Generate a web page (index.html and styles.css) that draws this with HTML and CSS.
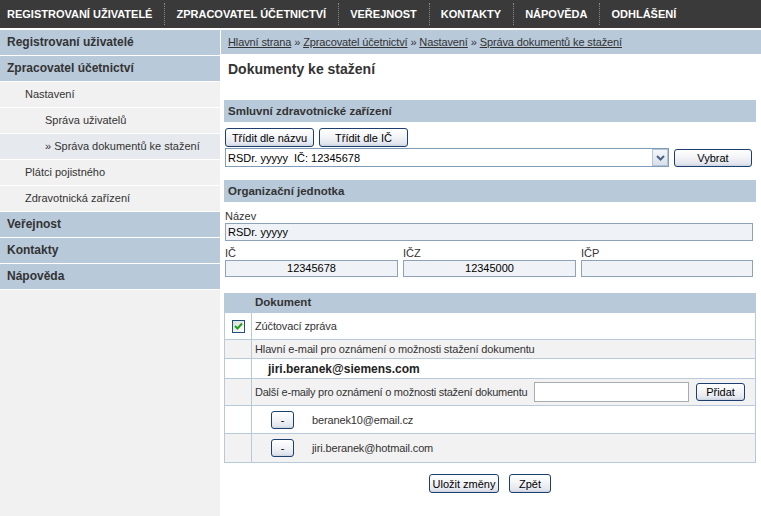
FILE: index.html
```html
<!DOCTYPE html>
<html lang="cs">
<head>
<meta charset="utf-8">
<title>Dokumenty ke stažení</title>
<link rel="stylesheet" href="styles.css">
</head>
<body>
<div class="topnav">
  <a class="nav-item first">REGISTROVANÍ UŽIVATELÉ</a>
  <a class="nav-item">ZPRACOVATEL ÚČETNICTVÍ</a>
  <a class="nav-item">VEŘEJNOST</a>
  <a class="nav-item">KONTAKTY</a>
  <a class="nav-item">NÁPOVĚDA</a>
  <a class="nav-item">ODHLÁŠENÍ</a>
</div>
<div class="page">
  <div class="sidebar">
    <div class="side-item l1">Registrovaní uživatelé</div>
    <div class="side-item l1">Zpracovatel účetnictví</div>
    <div class="side-item l2">Nastavení</div>
    <div class="side-item l3">Správa uživatelů</div>
    <div class="side-item l3 active">» Správa dokumentů ke stažení</div>
    <div class="side-item l2">Plátci pojistného</div>
    <div class="side-item l2">Zdravotnická zařízení</div>
    <div class="side-item l1">Veřejnost</div>
    <div class="side-item l1">Kontakty</div>
    <div class="side-item l1">Nápověda</div>
  </div>
  <div class="main">
    <div class="crumb"><a>Hlavní strana</a> » <a>Zpracovatel účetnictví</a> » <a>Nastavení</a> » <a>Správa dokumentů ke stažení</a></div>
    <div class="content">
      <h1 class="title">Dokumenty ke stažení</h1>

      <div class="bar">Smluvní zdravotnické zařízení</div>
      <div class="sort-row">
        <button class="btn w89">Třídit dle názvu</button>
        <button class="btn w89">Třídit dle IČ</button>
      </div>
      <div class="select-row">
        <div class="select">
          <span class="select-text">RSDr. yyyyy&nbsp; IČ: 12345678</span>
          <span class="select-arrow"><svg width="9" height="6" viewBox="0 0 9 6"><path d="M1 1 L4.5 4.5 L8 1" fill="none" stroke="#4d6185" stroke-width="2"/></svg></span>
        </div>
        <button class="btn w78">Vybrat</button>
      </div>

      <div class="bar bar2">Organizační jednotka</div>
      <div class="field-label">Název</div>
      <div class="ro-input wide">RSDr. yyyyy</div>
      <div class="triple">
        <div class="col">
          <div class="field-label sm">IČ</div>
          <div class="ro-input center">12345678</div>
        </div>
        <div class="col">
          <div class="field-label sm">IČZ</div>
          <div class="ro-input center">12345000</div>
        </div>
        <div class="col">
          <div class="field-label sm">IČP</div>
          <div class="ro-input center"></div>
        </div>
      </div>

      <div class="doc-table">
        <div class="row head"><div class="c1"></div><div class="c2">Dokument</div></div>
        <div class="row r27"><div class="c1"><span class="chk"><svg width="9" height="8" viewBox="0 0 9 8"><path d="M1 4 L3.5 6.5 L8 1.5" fill="none" stroke="#21a121" stroke-width="2"/></svg></span></div><div class="c2">Zúčtovací zpráva</div></div>
        <div class="row gray r19"><div class="c1"></div><div class="c2">Hlavní e-mail pro oznámení o možnosti stažení dokumentu</div></div>
        <div class="row r20"><div class="c1"></div><div class="c2 main-mail">jiri.beranek@siemens.com</div></div>
        <div class="row gray r27"><div class="c1"></div><div class="c2 add"><span class="add-label">Další e-maily pro oznámení o možnosti stažení dokumentu</span><span class="text-input"></span><button class="btn w49">Přidat</button></div></div>
        <div class="row r28"><div class="c1"></div><div class="c2 mail"><button class="btn minus">-</button><span>beranek10@email.cz</span></div></div>
        <div class="row gray r28"><div class="c1"></div><div class="c2 mail"><button class="btn minus">-</button><span>jiri.beranek@hotmail.com</span></div></div>
      </div>

      <div class="actions">
        <button class="btn w70">Uložit změny</button>
        <button class="btn w42">Zpět</button>
      </div>
    </div>
  </div>
</div>
</body>
</html>
```
FILE: styles.css
```css
* { box-sizing: border-box; }
html, body { margin: 0; padding: 0; background: #fff; }
body {
  font-family: "Liberation Sans", Arial, sans-serif;
  font-size: 11px;
  color: #333;
}

/* top navigation */
.topnav {
  height: 28px;
  background: #3a3a3a;
  display: flex;
  align-items: center;
  margin-bottom: 2px;
}
.nav-item {
  position: relative;
  color: #fff;
  font-weight: bold;
  font-size: 11px;
  padding: 0 12px;
  line-height: 28px;
  white-space: nowrap;
}
.nav-item.first { padding-left: 7px; }
.nav-item + .nav-item::before {
  content: "";
  position: absolute;
  left: 0;
  top: 3px;
  height: 22px;
  border-left: 1px dotted #8a8a8a;
}

/* layout */
.page { display: flex; gap: 1px; }
.sidebar {
  width: 220px;
  flex: 0 0 220px;
  background: #f1f1f1;
  min-height: 486px;
}
.main { flex: 1; }

/* sidebar */
.side-item {
  height: 26px;
  line-height: 25px;
  border-bottom: 1px solid #fff;
  white-space: nowrap;
  color: #333;
}
.side-item.l1 {
  background: #b8c9da;
  font-weight: bold;
  font-size: 12px;
  padding-left: 7px;
}
.side-item.l2 { padding-left: 25px; }
.side-item.l3 { padding-left: 45px; }
.side-item.active { background: #e6eaee; }

/* breadcrumb */
.crumb {
  height: 24px;
  line-height: 24px;
  background: #b8c9da;
  padding-left: 7px;
  color: #333;
  white-space: nowrap;
  letter-spacing: -0.12px;
}
.crumb a { text-decoration: underline; color: #333; }

.content { padding: 0 5px 0 3px; }

.title {
  margin: 7px 0 22px 4px;
  font-size: 14px;
  line-height: 17px;
  font-weight: bold;
  color: #333;
}

.bar {
  height: 22px;
  line-height: 22px;
  background: #b8c9da;
  padding-left: 4px;
  font-weight: bold;
  font-size: 11.5px;
  color: #333;
}
.bar2 { margin-top: 13px; }

/* buttons */
.btn {
  font-family: "Liberation Sans", Arial, sans-serif;
  font-size: 11px;
  color: #000;
  height: 19px;
  padding: 0;
  border: 1px solid #1c3f6e;
  border-radius: 3px;
  background: linear-gradient(#ffffff 0%, #f3f4f7 45%, #e3e6ee 85%, #ccd3df 100%);
  line-height: 16px;
}
.w89 { width: 89px; }
.w78 { width: 78px; height: 18px; }
.w49 { width: 49px; height: 18px; }
.w70 { width: 70px; }
.w42 { width: 42px; }

.sort-row {
  display: flex;
  gap: 5px;
  margin: 6px 0 0 1px;
}
.select-row {
  display: flex;
  align-items: center;
  gap: 5px;
  margin: 1px 0 0 1px;
}
.select {
  width: 444px;
  height: 19px;
  border: 1px solid #7f9db9;
  background: #fff;
  display: flex;
  align-items: center;
  justify-content: space-between;
  padding-left: 2px;
  color: #000;
}
.select-arrow {
  width: 16px;
  height: 17px;
  border: 1px solid #b5c3d6;
  background: linear-gradient(#f4f6fa, #d8e0ec);
  display: flex;
  align-items: center;
  justify-content: center;
}

/* organisation fields */
.field-label {
  margin: 8px 0 0 1px;
  line-height: 13px;
  color: #333;
}
.field-label.sm { margin-top: 6px; }
.ro-input {
  height: 18px;
  line-height: 16px;
  border: 1px solid #8ea3b8;
  background: #eff2f6;
  padding-left: 2px;
  color: #000;
  margin-left: 1px;
}
.ro-input.wide { margin-right: 3px; }
.ro-input.center { text-align: center; padding-left: 0; height: 17px; line-height: 15px; }
.triple {
  display: grid;
  grid-template-columns: 174px 174px 173px;
  gap: 4px;
  margin-right: 3px;
}

/* document table */
.doc-table {
  margin-top: 16px;
  border: 1px solid #b8c9da;
  border-top: 0;
  letter-spacing: -0.13px;
}
.row {
  display: flex;
  border-bottom: 1px solid #b8c9da;
}
.row:last-child { border-bottom: 0; }
.row.head {
  background: #b8c9da;
  height: 20px;
  font-weight: bold;
  font-size: 11.5px;
  line-height: 19px;
  letter-spacing: 0;
}
.row.gray { background: #f2f2f2; }
.r19 { height: 19px; }
.r20 { height: 20px; }
.r27 { height: 27px; }
.r28 { height: 28px; }
.c1 {
  width: 27px;
  flex: 0 0 27px;
  border-right: 1px solid #b8c9da;
  display: flex;
  align-items: center;
  justify-content: center;
}
.c2 {
  flex: 1;
  display: flex;
  align-items: center;
  padding-left: 3px;
  white-space: nowrap;
}
.chk {
  width: 13px;
  height: 13px;
  border: 1px solid #1c5180;
  background: linear-gradient(135deg, #dcdcd7, #ffffff);
  display: flex;
  align-items: center;
  justify-content: center;
}
.main-mail {
  font-weight: bold;
  font-size: 12px;
  padding-left: 16px;
  color: #222;
  letter-spacing: 0;
}
.add-label { width: 279px; letter-spacing: -0.25px; }
.text-input {
  width: 155px;
  height: 20px;
  border: 1px solid #a5acb5;
  background: #fff;
  margin-right: 7px;
}
.mail { padding-left: 19px; }
.minus {
  width: 23px;
  height: 18px;
  margin-right: 18px;
}

.actions {
  display: flex;
  justify-content: center;
  gap: 10px;
  margin-top: 11px;
}
```
